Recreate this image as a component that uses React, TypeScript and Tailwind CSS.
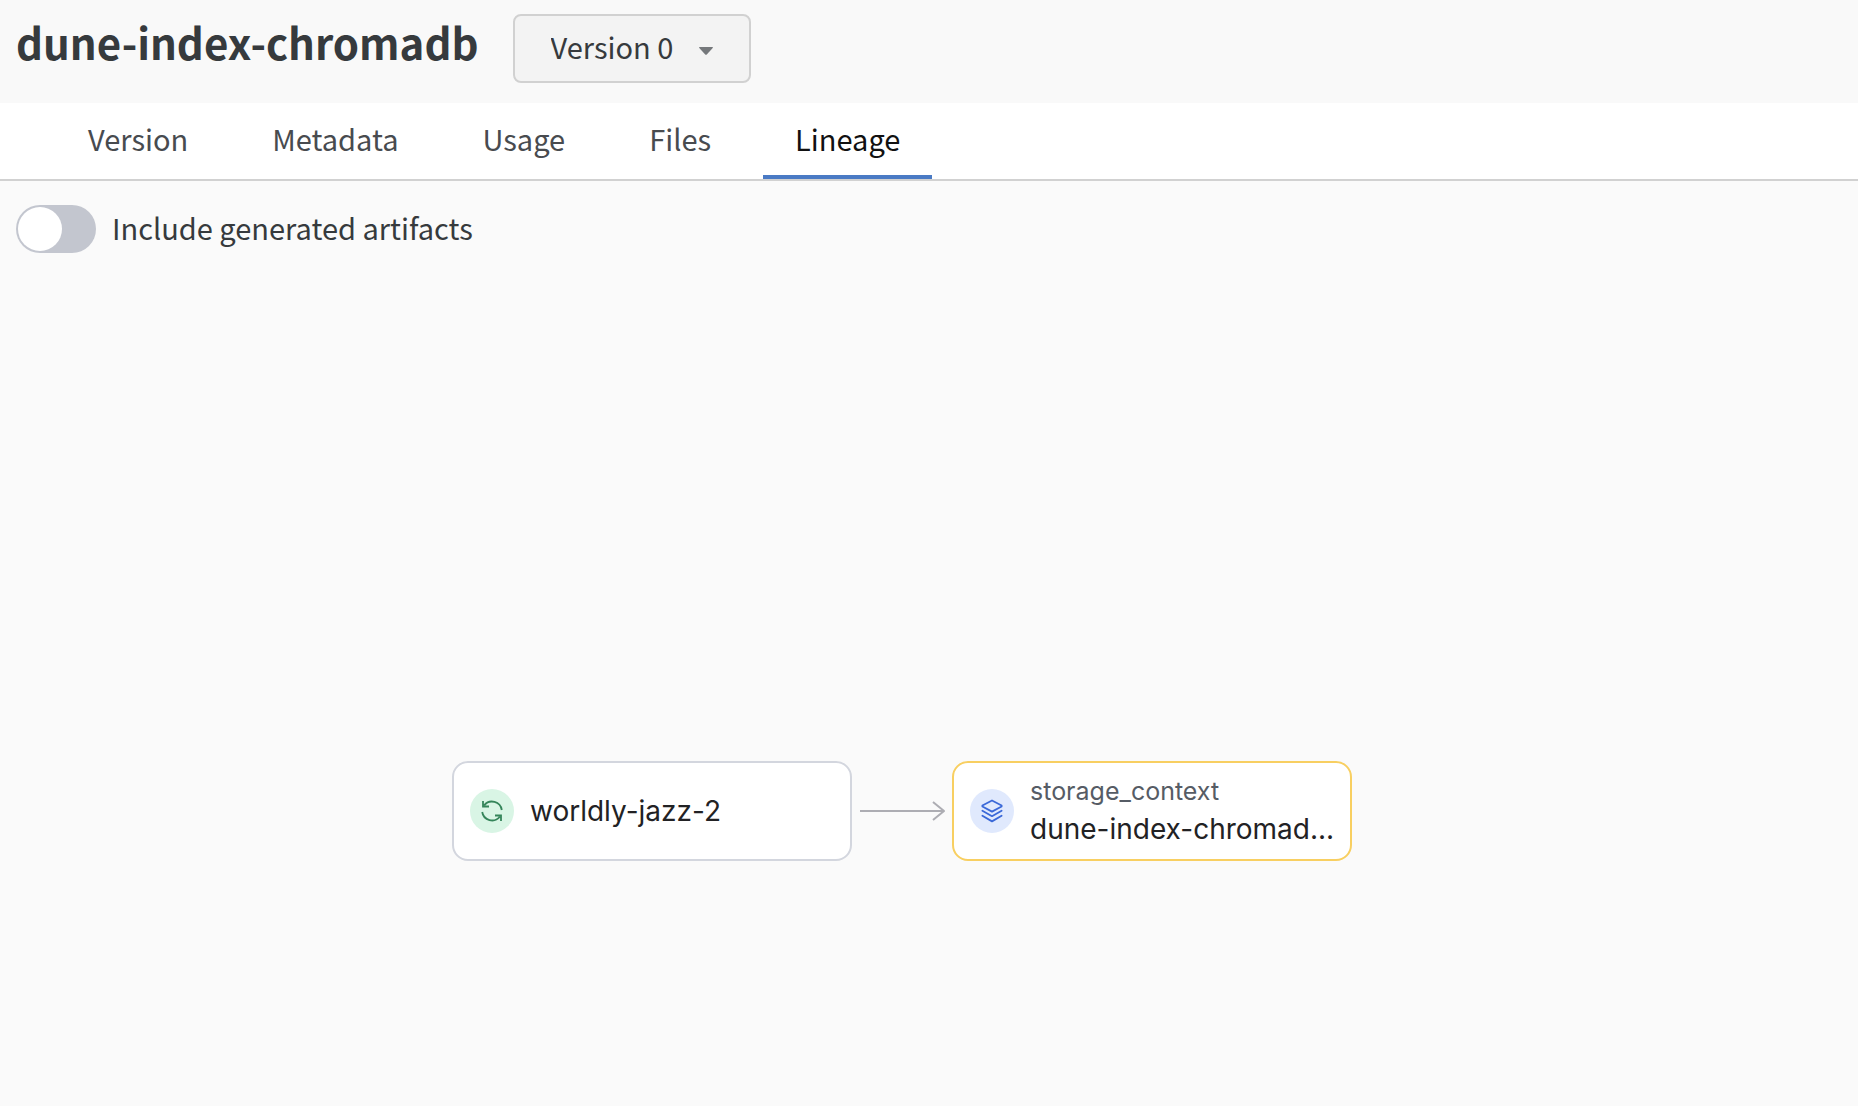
import { useState } from "react";
import type { ReactNode } from "react";

const tabs = ["Version", "Metadata", "Usage", "Files", "Lineage"];

function RunIcon() {
  return (
    <svg viewBox="0 0 24 24" className="size-6" fill="none" stroke="#35855a" strokeWidth="1.8" aria-hidden="true">
      <path d="M21.8 11A10 10 0 0 0 4.2 6.2M3 2v5.5h6" />
      <path d="M2.2 13a10 10 0 0 0 17.6 4.8M21 22v-5.5h-6" />
    </svg>
  );
}

function LayersIcon() {
  return (
    <svg viewBox="0 0 24 24" className="size-6" fill="none" stroke="#3a68d8" strokeWidth="1.8" strokeLinejoin="round" strokeLinecap="round" aria-hidden="true">
      <path d="M12 1.5 21.6 6.5v1L12 12.6 2.4 7.5v-1Z" />
      <path d="M2.4 11.8 12 17.2 21.6 11.8" />
      <path d="M2.4 16.8 12 22.4 21.6 16.8" />
    </svg>
  );
}

type NodeProps = { icon: ReactNode; tone: string; border: string; kind?: string; name: string };

function LineageNode({ icon, tone, border, kind, name }: NodeProps) {
  return (
    <div className={`flex h-[100px] w-[400px] items-center gap-4 rounded-2xl border-2 bg-white px-4 ${border}`}>
      <span className={`flex size-11 shrink-0 items-center justify-center rounded-full ${tone}`}>{icon}</span>
      <div className="min-w-0 flex-1">
        {kind && <p className="text-[25px] leading-9 text-[#565c65]">{kind}</p>}
        <p className="text-[28px] leading-10 whitespace-nowrap text-[#222224]">{name}</p>
      </div>
    </div>
  );
}

export default function App() {
  const [active, setActive] = useState("Lineage");
  const [included, setIncluded] = useState(false);

  return (
    <div className="flex min-h-screen flex-col bg-[#fafafa] font-['Noto_Sans_CJK_SC',sans-serif] text-[29px] leading-10 text-[#363a3d]">
      <header className="flex items-start gap-[34px] bg-[#f9f9f9] px-4 pt-3.5 pb-5">
        <h1 className="text-[42px] leading-[56px] font-bold">dune-index-chromadb</h1>
        <div className="relative">
          <select
            aria-label="Artifact version"
            className="h-[69px] appearance-none rounded-lg border-2 border-[#d1d1d1] bg-[#f3f3f3] pr-[75px] pb-1.5 pl-9"
          >
            <option>Version 0</option>
          </select>
          <svg viewBox="0 0 14 8" className="pointer-events-none absolute top-[33px] right-[38px] h-2 w-3.5" aria-hidden="true">
            <path d="M.6 0h12.8q.9 .3.3 1L7.8 7.5q-.8.6-1.6 0L.3 1Q-.3 .3.6 0Z" fill="#75787b" />
          </svg>
        </div>
      </header>

      <nav className="flex gap-5 border-b-2 border-[#d1d1d1] bg-white px-14" role="tablist" aria-label="Artifact sections">
        {tabs.map((tab) => (
          <button
            key={tab}
            type="button"
            role="tab"
            aria-selected={tab === active}
            onClick={() => setActive(tab)}
            className={`h-[76px] border-b-4 px-8 pb-0.5 ${
              tab === active ? "border-[#4a7ac4] text-[#111]" : "border-transparent text-[#484b4f]"
            }`}
          >
            {tab}
          </button>
        ))}
      </nav>

      <main className="relative flex-1 px-4 pt-6">
        <label className="inline-flex items-center gap-4">
          <input
            type="checkbox"
            role="switch"
            checked={included}
            onChange={(e) => setIncluded(e.target.checked)}
            className="peer sr-only"
          />
          <span className="flex h-12 w-20 items-center rounded-full bg-[#c3c6cf] p-0.5 peer-checked:justify-end peer-checked:bg-[#4a7ac4]">
            <span className="size-11 rounded-full bg-white" />
          </span>
          <span className="pb-1">Include generated artifacts</span>
        </label>

        <div className="absolute top-[580px] left-[452px] flex items-center font-['Inter',sans-serif]">
          <LineageNode icon={<RunIcon />} tone="bg-[#d9f5e5]" border="border-[#d3d6de]" name="worldly-jazz-2" />
          <svg viewBox="0 0 100 20" className="h-5 w-[100px]" fill="none" stroke="#adadb3" strokeWidth="2" aria-hidden="true">
            <path d="M8 10h84M81 1l11 9-11 9" strokeLinejoin="round" />
          </svg>
          <LineageNode
            icon={<LayersIcon />}
            tone="bg-[#e0e9fd]"
            border="border-[#f8cf61]"
            kind="storage_context"
            name="dune-index-chromad..."
          />
        </div>
      </main>
    </div>
  );
}
